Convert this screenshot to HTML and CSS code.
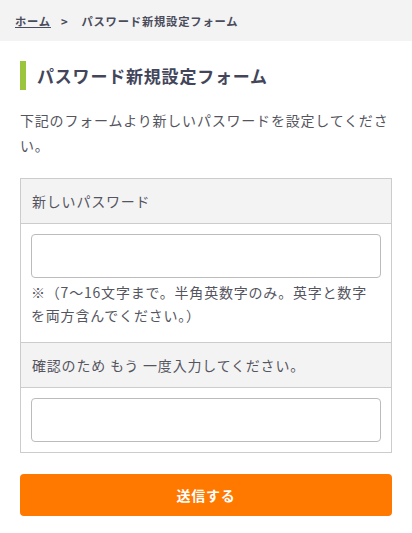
FILE: index.html
```html
<!DOCTYPE html>
<html lang="ja">
<head>
<meta charset="utf-8">
<title>パスワード新規設定フォーム</title>
<link rel="stylesheet" href="styles.css">
</head>
<body>
<nav class="breadcrumb">
  <a class="crumb-link" href="#">ホーム</a>
  <span class="crumb-sep">&gt;</span>
  <span class="crumb-current">パスワード新規設定フォーム</span>
</nav>
<main class="content">
  <h1 class="page-title">パスワード新規設定フォーム</h1>
  <p class="lead">下記のフォームより新しいパスワードを設定してください。</p>
  <form class="form">
    <div class="form-table">
      <div class="form-head">新しいパスワード</div>
      <div class="form-cell form-cell-note">
        <input class="form-input" type="password">
        <p class="note">※（7〜16文字まで。半角英数字のみ。英字と数字を両方含んでください。）</p>
      </div>
      <div class="form-head">確認のため もう 一度入力してください。</div>
      <div class="form-cell">
        <input class="form-input" type="password">
      </div>
    </div>
    <button class="submit" type="button">送信する</button>
  </form>
</main>
</body>
</html>
```
FILE: styles.css
```css
* { box-sizing: border-box; }
body {
  margin: 0;
  font-family: "Noto Sans CJK JP", "Noto Sans", sans-serif;
  color: #555560;
  letter-spacing: 0.05em;
  background: #fff;
}
.breadcrumb {
  height: 41px;
  background: #f3f3f3;
  display: flex;
  align-items: center;
  padding: 0 15px;
  font-size: 11.3px;
  font-weight: bold;
  color: #4a4c5c;
}
.crumb-link {
  color: #4a4c5c;
  text-decoration: underline;
}
.crumb-sep {
  margin: 0 13px 0 10px;
}
.content {
  padding: 0 20px;
}
.page-title {
  margin: 20px 0 0;
  height: 29px;
  line-height: 29px;
  border-left: 6px solid #9bc53d;
  padding-left: 11px;
  font-size: 17px;
  font-weight: bold;
  color: #43465a;
}
.lead {
  margin: 18px 0 0;
  font-size: 14px;
  line-height: 25px;
  color: #555560;
}
.form {
  margin: 20px 0 0;
}
.form-table {
  border: 1px solid #cccccc;
}
.form-head {
  background: #f3f3f3;
  padding: 11px 11px 11px;
  font-size: 14px;
  line-height: 22px;
  border-bottom: 1px solid #cccccc;
}
.form-cell {
  padding: 10px 10px 10px;
}
.form-cell-note {
  padding-bottom: 15px;
  border-bottom: 1px solid #cccccc;
}
.form-input {
  display: block;
  width: 100%;
  height: 44px;
  border: 1px solid #bbbbbb;
  border-radius: 4px;
  background: #fff;
  margin: 0;
}
.note {
  margin: 3px 0 0;
  font-size: 14px;
  line-height: 23px;
}
.submit {
  display: block;
  width: 100%;
  height: 42px;
  margin-top: 21px;
  border: none;
  border-radius: 4px;
  background: #ff7800;
  color: #fff;
  font-family: inherit;
  font-size: 14px;
  font-weight: bold;
  letter-spacing: 0.05em;
}
```
